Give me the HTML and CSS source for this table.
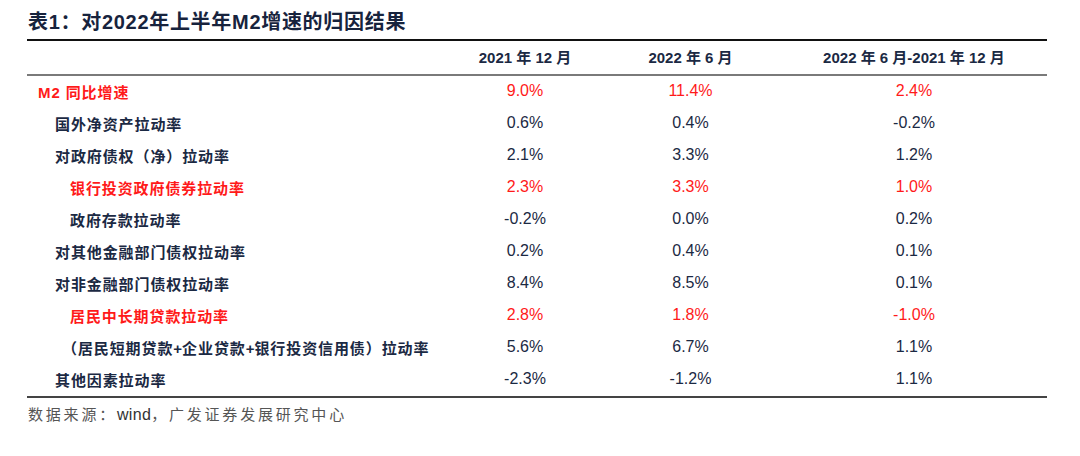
FILE: index.html
```html
<!DOCTYPE html>
<html lang="zh-CN">
<head>
<meta charset="utf-8">
<title>表1</title>
<link rel="stylesheet" href="styles.css">
</head>
<body>
<div class="page">
  <h1 class="title">表1：对2022年上半年M2增速的归因结果</h1>
  <table class="tbl">
    <colgroup>
      <col class="c-label"><col class="c-a"><col class="c-b"><col class="c-c">
    </colgroup>
    <thead>
      <tr>
        <th></th>
        <th>2021 年 12 月</th>
        <th>2022 年 6 月</th>
        <th>2022 年 6 月-2021 年 12 月</th>
      </tr>
    </thead>
    <tbody>
      <tr class="red">
        <td class="lbl l0">M2 同比增速</td><td>9.0%</td><td>11.4%</td><td>2.4%</td>
      </tr>
      <tr>
        <td class="lbl l1">国外净资产拉动率</td><td>0.6%</td><td>0.4%</td><td>-0.2%</td>
      </tr>
      <tr>
        <td class="lbl l1">对政府债权（净）拉动率</td><td>2.1%</td><td>3.3%</td><td>1.2%</td>
      </tr>
      <tr class="red">
        <td class="lbl l2">银行投资政府债券拉动率</td><td>2.3%</td><td>3.3%</td><td>1.0%</td>
      </tr>
      <tr>
        <td class="lbl l2">政府存款拉动率</td><td>-0.2%</td><td>0.0%</td><td>0.2%</td>
      </tr>
      <tr>
        <td class="lbl l1">对其他金融部门债权拉动率</td><td>0.2%</td><td>0.4%</td><td>0.1%</td>
      </tr>
      <tr>
        <td class="lbl l1">对非金融部门债权拉动率</td><td>8.4%</td><td>8.5%</td><td>0.1%</td>
      </tr>
      <tr class="red">
        <td class="lbl l2">居民中长期贷款拉动率</td><td>2.8%</td><td>1.8%</td><td>-1.0%</td>
      </tr>
      <tr>
        <td class="lbl l2p">（居民短期贷款<span class="plus">+</span>企业贷款<span class="plus">+</span>银行投资信用债）拉动率</td><td>5.6%</td><td>6.7%</td><td>1.1%</td>
      </tr>
      <tr>
        <td class="lbl l1">其他因素拉动率</td><td>-2.3%</td><td>-1.2%</td><td>1.1%</td>
      </tr>
    </tbody>
  </table>
  <p class="source">数据来源：<span class="latin">wind</span>，广发证券发展研究中心</p>
</div>
</body>
</html>
```

FILE: styles.css
```css
html, body {
  margin: 0;
  padding: 0;
  background: #ffffff;
}

.page {
  padding: 9px 0 0 27px;
  width: 1020px;
  font-family: "Liberation Sans", "Noto Sans CJK SC", sans-serif;
  color: #1b2943;
}

.title {
  margin: 0;
  padding: 0 0 0 1px;
  box-sizing: border-box;
  height: 32px;
  line-height: 26px;
  font-size: 20px;
  font-weight: 700;
  letter-spacing: 0.7px;
  color: #17233d;
  border-bottom: 2px solid #111111;
}

.tbl {
  width: 1020px;
  border-collapse: collapse;
  table-layout: fixed;
}

.c-label { width: 423px; }
.c-a { width: 150px; }
.c-b { width: 181px; }
.c-c { width: 266px; }

.tbl th {
  height: 31px;
  padding: 0 0 2px 0;
  font-size: 15px;
  font-weight: 700;
  text-align: center;
  vertical-align: middle;
  color: #1b2943;
  border-bottom: 2px solid #7a7a7a;
}

.tbl td {
  height: 30px;
  padding: 0 0 2px 0;
  font-size: 16px;
  text-align: center;
  vertical-align: middle;
  color: #1b2943;
}

.tbl tbody tr:last-child td {
  border-bottom: 2px solid #444444;
}

.tbl td.lbl {
  text-align: left;
  font-family: "Noto Sans CJK SC", sans-serif;
  font-size: 15px;
  font-weight: 700;
  letter-spacing: 0.9px;
}

.tbl td.l0 { padding-left: 11px; font-family: "Liberation Sans", "Noto Sans CJK SC", sans-serif; }
.tbl td.l1 { padding-left: 28px; }
.tbl td.l2 { padding-left: 43px; }
.tbl td.l2p { padding-left: 35px; }

.plus {
  font-family: "Liberation Sans", sans-serif;
  letter-spacing: 0;
}

.tbl tr.red td {
  color: #ff1a1a;
}

.source {
  margin: 5px 0 0 1px;
  font-family: "Noto Sans CJK SC", sans-serif;
  font-size: 15px;
  letter-spacing: 2.8px;
  color: #555555;
}

.source .latin {
  font-family: "Liberation Sans", sans-serif;
  font-size: 16px;
  letter-spacing: 0.3px;
  color: #333333;
}
```
